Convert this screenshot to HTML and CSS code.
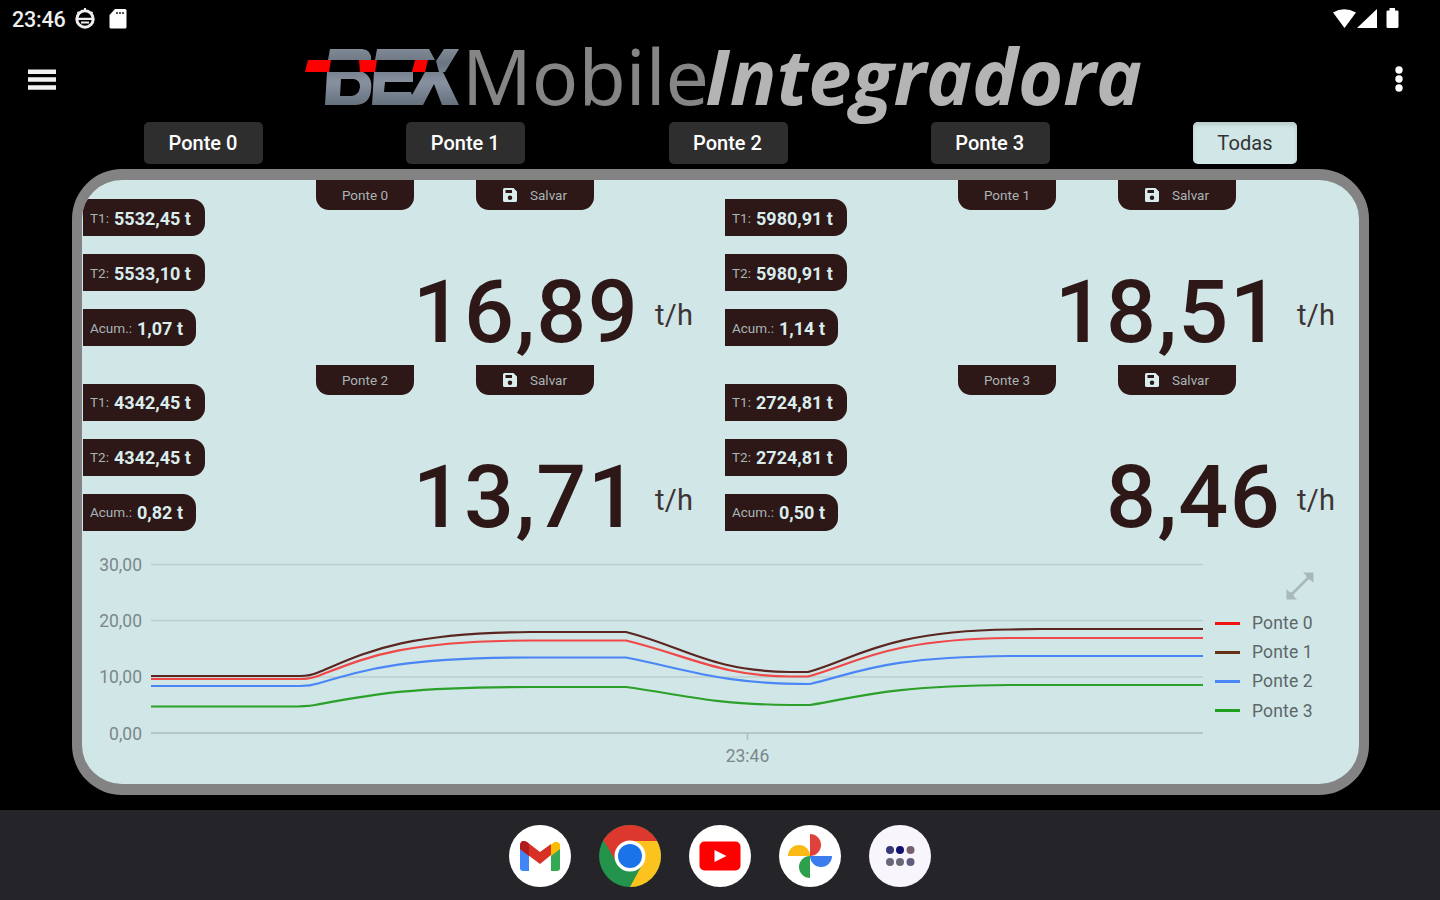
FILE: index.html
```html
<!DOCTYPE html>
<html lang="pt-BR">
<head>
<meta charset="utf-8">
<title>BEX Mobile Integradora</title>
<link rel="stylesheet" href="styles.css">
</head>
<body>
<div class="screen">
  <div class="status">
    <span class="clock">23:46</span>
    <svg class="st-face" viewBox="0 0 22 22" width="22" height="22"><circle cx="11" cy="11" r="8.2" fill="none" stroke="#eee" stroke-width="3"/><path d="M4 10.900H18M7 14.500H15" stroke="#eee" stroke-width="2.200"/><path d="M11 0v4M3.500 4l2 2M18.500 4l-2 2" stroke="#eee" stroke-width="2"/></svg>
    <svg class="st-sd" viewBox="0 0 18 20" width="18" height="20"><path d="M6 0H16Q17.500 0 17.500 1.500V18Q17.500 19.500 16 19.500H2Q.5 19.500 .5 18V6Z" fill="#fff"/><path d="M7 4h8" stroke="#555" stroke-width="2" stroke-dasharray="2 1"/></svg>
    <svg class="st-right" viewBox="0 0 70 22" width="70" height="22" fill="#fff"><path d="M1 4.500Q12 -2 24 4.500L12.500 20Z"/><path d="M45 1V20H25Z"/><path d="M54.500 3.500Q54.500 2.500 56 2.500H57.500V0H63V2.500H65Q66.500 2.500 66.500 3.500V18.500Q66.500 20 65 20H56Q54.500 20 54.500 18.500Z"/></svg>
  </div>
  <header class="header">
    <svg class="menu" viewBox="0 0 28 22" width="28" height="22" fill="#f2f2f2"><path d="M0 .5h28v4.500H0zM0 8.300h28v4.500H0zM0 16.200h28v4.500H0z"/></svg>
    <svg class="logo" viewBox="0 -25 850 118" width="850" height="118">
      <defs><linearGradient id="steel" x1="0" y1="0" x2="0" y2="1"><stop offset="0" stop-color="#818b98"/><stop offset=".25" stop-color="#6c7682"/><stop offset=".6" stop-color="#8791a0"/><stop offset="1" stop-color="#66717e"/></linearGradient></defs>
      <path fill="url(#steel)" fill-rule="evenodd" d="M29 8H61Q71 9 70 19H27ZM26 31H62Q72 36 70 49Q69 63 55 64H24ZM40 38L39 55H51Q58 54 59 46Q59 39 53 38ZM76 8H128L134 19H74ZM73 31H112V41H84L83 51H110L111 54L124 31H142L158 64H141L133 43L122 64H71ZM158 8H143L135 20L138 31H144Z"/>
      <path fill="#f00" d="M7 19H30L28 31H4ZM58 19H76L74 31H59ZM114 19H127L124 31H111Z"/>
      <text class="logo-thin" x="161" y="63.500" textLength="247" lengthAdjust="spacingAndGlyphs">Mobile</text>
      <text class="logo-bold" x="404" y="63.500" textLength="437" lengthAdjust="spacingAndGlyphs">Integradora</text>
    </svg>
    <svg class="more" viewBox="0 0 10 28" width="10" height="28" fill="#fff"><circle cx="5" cy="5" r="3.700"/><circle cx="5" cy="14" r="3.700"/><circle cx="5" cy="23" r="3.700"/></svg>
  </header>
  <nav class="tabs">
    <button class="tab">Ponte 0</button>
    <button class="tab">Ponte 1</button>
    <button class="tab">Ponte 2</button>
    <button class="tab">Ponte 3</button>
    <button class="tab tab-on">Todas</button>
  </nav>
  <main class="panel">
    <div class="cells">
      <section class="cell">
        <div class="tags">
          <div class="tag"><span>T1:</span><b>5532,45 t</b></div>
          <div class="tag"><span>T2:</span><b>5533,10 t</b></div>
          <div class="tag tag-ac"><span>Acum.:</span><b>1,07 t</b></div>
        </div>
        <div class="main">
          <div class="flaps"><div class="flap">Ponte 0</div><div class="flap save"><svg viewBox="0 0 14 14" width="14" height="14"><path fill="#d9eded" fill-rule="evenodd" d="M1.500 0H10.500L14 3.500V12.500Q14 14 12.500 14H1.500Q0 14 0 12.500V1.500Q0 0 1.500 0ZM2.500 2V5H9V2ZM7 7.500A2.200 2.200 0 1 0 7 12A2.200 2.200 0 1 0 7 7.500Z"/></svg><span>Salvar</span></div></div>
          <div class="reading"><strong>16,89</strong><span>t/h</span></div>
        </div>
      </section>
      <section class="cell">
        <div class="tags">
          <div class="tag"><span>T1:</span><b>5980,91 t</b></div>
          <div class="tag"><span>T2:</span><b>5980,91 t</b></div>
          <div class="tag tag-ac"><span>Acum.:</span><b>1,14 t</b></div>
        </div>
        <div class="main">
          <div class="flaps"><div class="flap">Ponte 1</div><div class="flap save"><svg viewBox="0 0 14 14" width="14" height="14"><path fill="#d9eded" fill-rule="evenodd" d="M1.500 0H10.500L14 3.500V12.500Q14 14 12.500 14H1.500Q0 14 0 12.500V1.500Q0 0 1.500 0ZM2.500 2V5H9V2ZM7 7.500A2.200 2.200 0 1 0 7 12A2.200 2.200 0 1 0 7 7.500Z"/></svg><span>Salvar</span></div></div>
          <div class="reading"><strong>18,51</strong><span>t/h</span></div>
        </div>
      </section>
      <section class="cell">
        <div class="tags">
          <div class="tag"><span>T1:</span><b>4342,45 t</b></div>
          <div class="tag"><span>T2:</span><b>4342,45 t</b></div>
          <div class="tag tag-ac"><span>Acum.:</span><b>0,82 t</b></div>
        </div>
        <div class="main">
          <div class="flaps"><div class="flap">Ponte 2</div><div class="flap save"><svg viewBox="0 0 14 14" width="14" height="14"><path fill="#d9eded" fill-rule="evenodd" d="M1.500 0H10.500L14 3.500V12.500Q14 14 12.500 14H1.500Q0 14 0 12.500V1.500Q0 0 1.500 0ZM2.500 2V5H9V2ZM7 7.500A2.200 2.200 0 1 0 7 12A2.200 2.200 0 1 0 7 7.500Z"/></svg><span>Salvar</span></div></div>
          <div class="reading"><strong>13,71</strong><span>t/h</span></div>
        </div>
      </section>
      <section class="cell">
        <div class="tags">
          <div class="tag"><span>T1:</span><b>2724,81 t</b></div>
          <div class="tag"><span>T2:</span><b>2724,81 t</b></div>
          <div class="tag tag-ac"><span>Acum.:</span><b>0,50 t</b></div>
        </div>
        <div class="main">
          <div class="flaps"><div class="flap">Ponte 3</div><div class="flap save"><svg viewBox="0 0 14 14" width="14" height="14"><path fill="#d9eded" fill-rule="evenodd" d="M1.500 0H10.500L14 3.500V12.500Q14 14 12.500 14H1.500Q0 14 0 12.500V1.500Q0 0 1.500 0ZM2.500 2V5H9V2ZM7 7.500A2.200 2.200 0 1 0 7 12A2.200 2.200 0 1 0 7 7.500Z"/></svg><span>Salvar</span></div></div>
          <div class="reading"><strong>8,46</strong><span>t/h</span></div>
        </div>
      </section>
    </div>
    <div class="chart">
      <svg class="plot" viewBox="82 549 1124 235" width="1124" height="235">
        <path class="grid" d="M151 564.500H1203M151 620.500H1203M151 677H1203"/>
        <path class="axis" d="M151 733H1203M747.500 733V740"/>
        <g class="ticks"><text x="142" y="571" text-anchor="end">30,00</text><text x="142" y="627" text-anchor="end">20,00</text><text x="142" y="683" text-anchor="end">10,00</text><text x="142" y="739.500" text-anchor="end">0,00</text><text x="747.500" y="762" text-anchor="middle">23:46</text></g>
        <g class="lines">
          <path stroke="#2ba02b" d="M151 706.500H290Q306 706.500 315 705C375 694 405 687.500 530 687H626C690 696 710 704 790 705H810C860 697 885 686 1010 685H1203"/>
          <path stroke="#4a86f5" d="M151 686H300Q310 686 318 683.500C370 668 405 658 530 657.500H626C690 670 720 684 810 684C860 672 885 657 1010 656H1203"/>
          <path stroke="#f04747" d="M151 679H300Q310 679 318 676C365 658 400 641 530 640.500H626C690 656 720 676 790 676.500H808C855 664 885 639 1010 638H1203"/>
          <path stroke="#5b2620" d="M151 676H300Q310 676 318 672.500C365 653 400 633 530 632H626C685 647 710 671 790 672H808C855 659 885 631 1010 629.500L1040 629H1203"/>
        </g>
      </svg>
      <div class="side">
        <svg class="expand" viewBox="0 0 30 30" width="30" height="30"><path d="M5 25L25 5" stroke="#a9b9b8" stroke-width="2.500"/><path d="M18 1.500H28.500V12L25.500 9L22 8L21 4.500ZM1.500 18V28.500H12L9 25.500L8 22L4.500 21Z" fill="#a9b9b8"/></svg>
        <ul class="legend">
          <li><i class="c0"></i>Ponte 0</li><li><i class="c1"></i>Ponte 1</li><li><i class="c2"></i>Ponte 2</li><li><i class="c3"></i>Ponte 3</li>
        </ul>
      </div>
    </div>
  </main>
  <footer class="dock">
    <svg viewBox="0 0 62 62" width="62" height="62"><circle cx="31" cy="31" r="31" fill="#fff"/><path fill="#4285f4" d="M11 20L20 27V46H14Q11 46 11 43Z"/><path fill="#34a853" d="M42 27L51 20V43Q51 46 48 46H42Z"/><path fill="#fbbc04" d="M42 20Q47 14 51 19V24L42 31Z"/><path fill="#d93025" d="M11 24V20Q12 14 18 17L31 27L42 19V30L31 39Z"/><path fill="#b31c1c" d="M11 24V20Q12 14 18 17L20 19V31Z"/></svg>
    <svg viewBox="0 0 62 62" width="62" height="62"><defs><clipPath id="disc"><circle cx="31" cy="31" r="31"/></clipPath></defs><g clip-path="url(#disc)"><path fill="#24934b" d="M0 0H62V62H0Z"/><path fill="#fcc31e" d="M31 16H62V62H31L44 38Z"/><path fill="#dc382d" d="M0 16V0H62V16H31L18 38L5 16Z"/></g><circle cx="31" cy="31" r="15.500" fill="#fff"/><circle cx="31" cy="31" r="12" fill="#1a73e8"/></svg>
    <svg viewBox="0 0 62 62" width="62" height="62"><circle cx="31" cy="31" r="31" fill="#fff"/><rect x="10.500" y="16.500" width="41" height="29" rx="5" fill="#f00"/><path fill="#fff" d="M25.500 25L37.500 31L25.500 37Z"/></svg>
    <svg viewBox="0 0 62 62" width="62" height="62"><circle cx="31" cy="31" r="31" fill="#fff"/><path fill="#e0413a" d="M31 9A11 11 0 0 1 31 31Z"/><path fill="#3b7ded" d="M31 31H53A11 11 0 0 1 31 31Z"/><path fill="#2da04c" d="M31 31V53A11 11 0 0 1 31 31Z"/><path fill="#fbb915" d="M31 31H9A11 11 0 0 1 31 31Z"/></svg>
    <svg viewBox="0 0 62 62" width="62" height="62"><circle cx="31" cy="31" r="31" fill="#f8f5fc"/><g fill="#686878"><circle cx="21" cy="25" r="4" fill="#373779"/><circle cx="31" cy="25" r="4" fill="#11116d"/><circle cx="41.500" cy="25" r="4" fill="#76606f"/><circle cx="21" cy="37" r="4"/><circle cx="31" cy="37" r="4"/><circle cx="41.500" cy="37" r="4" fill="#5d5d80"/></g></svg>
  </footer>
</div>
</body>
</html>
```
FILE: styles.css
```css
* { box-sizing: border-box; }
body { margin: 0; background: #000; font-family: Roboto, "Liberation Sans", sans-serif; }
.screen { width: 1440px; height: 900px; display: flex; flex-direction: column; overflow: hidden; }
.status { height: 38px; display: flex; align-items: center; padding: 0 38px 0 12px; color: #eee; }
.clock { font-size: 21.5px; font-weight: 500; width: 62px; padding-top: 1px; letter-spacing: -.2px; }
.st-sd { margin-left: 13px; }
.st-right { margin-left: auto; }
.header { height: 84px; display: flex; align-items: flex-start; padding: 0 36px 0 28px; }
.menu { margin-top: 31px; }
.logo { margin: -22px 0 0 245px; }
.more { margin: 27px 0 0 auto; }
.logo-thin { font: 400 77px "Noto Sans", sans-serif; fill: #858585; }
.logo-bold { font: italic 700 77px "Open Sans", sans-serif; fill: #b4b4b4; }
.tabs { height: 47px; display: flex; justify-content: space-between; padding: 0 143px 0 144px; }
.tab { width: 119px; height: 42px; border: 0; border-radius: 5px; background: #2e2e2e; color: #fff; font: 500 20px Roboto, sans-serif; padding: 0 1px 1px 0; }
.tab-on { width: 104px; background: #d1e7e7; color: #333; font-weight: 400; letter-spacing: .1px; box-shadow: inset 0 3px 4px #b8caca; padding-right: 0; }
.panel { width: 1297px; height: 626px; margin-left: 72px; border: 11px solid #838383; border-width: 11px 10px; border-radius: 50px; background: #d1e6e7; overflow: hidden; }
.cells { width: 1284px; display: grid; grid-template-columns: 642px 642px; grid-template-rows: 184.500px 184.500px; margin-left: 1px; }
.cell { display: flex; }
.tags { width: 233px; display: flex; flex-direction: column; align-items: flex-start; gap: 18px; padding-top: 19px; }
.tag { height: 37px; min-width: 122px; display: flex; align-items: center; padding: 0 0 0 7px; border-radius: 0 13px 13px 0; background: #2d1717; color: #d9eded; }
.tag span { width: 24px; font-size: 13.500px; color: #a9b5b5; }
.tag b { font-size: 18px; font-weight: 700; white-space: nowrap; padding-top: 1px; }
.tag-ac { min-width: 113px; }
.tag-ac span { width: 47px; }
.main { width: 378px; }
.flaps { display: flex; gap: 62px; }
.flap { width: 98px; height: 30px; display: flex; align-items: center; justify-content: center; border-radius: 0 0 13px 13px; background: #2d1717; color: #a9b5b5; font-size: 13.500px; }
.save { width: 118px; gap: 13px; }
.reading { display: flex; justify-content: flex-end; align-items: baseline; color: #2d1717; margin-top: 50px; }
.reading strong { font-size: 88px; line-height: 104px; font-weight: 500; letter-spacing: 1.300px; }
.reading span { font-size: 29px; width: 39px; margin-left: 16px; letter-spacing: .3px; color: #3d3435; position: relative; top: -17px; }
.chart { display: flex; }
.plot { flex: none; }
.grid { stroke: #bccfcf; stroke-width: 1.500; }
.axis { stroke: #abbcbc; stroke-width: 1.500; fill: none; }
.ticks { font-size: 17.500px; fill: #7a8888; }
.lines path { fill: none; stroke-width: 2.200; }
.side { padding: 22px 0 0 9px; }
.expand { display: block; margin-left: 70px; }
.legend { list-style: none; margin: 7.500px 0 0; padding: 0; font-size: 17.500px; color: #5c6868; }
.legend li { height: 29.200px; display: flex; align-items: center; gap: 12px; letter-spacing: .15px; }
.legend i { width: 25px; height: 3px; }
.c0 { background: #f01414; } .c1 { background: #653016; } .c2 { background: #4a86f5; } .c3 { background: #1fa01f; }
.dock { height: 90px; margin-top: 15px; background: #252429; display: flex; justify-content: center; align-items: center; gap: 28px; padding-top: 1px; }
```
